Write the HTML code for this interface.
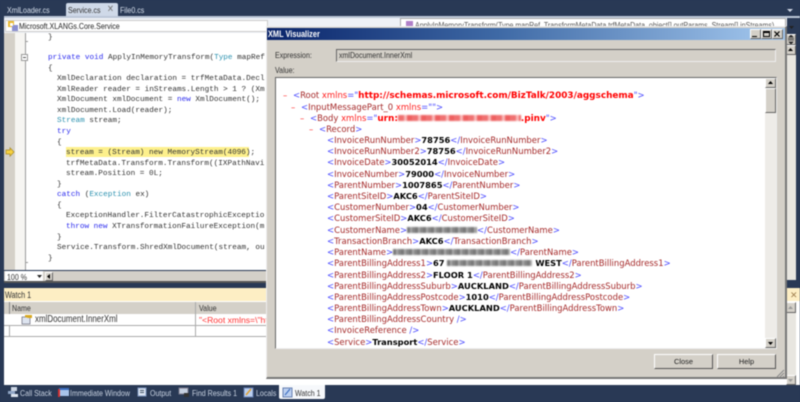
<!DOCTYPE html>
<html><head><meta charset="utf-8"><style>
html,body{margin:0;padding:0;width:800px;height:402px;overflow:hidden;background:#293955}
#r{position:relative;width:800px;height:402px;overflow:hidden;background:#293955;filter:blur(.45px);font-family:"Liberation Sans",sans-serif;font-size:8.6px;color:#222}
#r div{position:absolute;box-sizing:border-box}
.t{white-space:pre;line-height:12px;height:12px;transform:scaleX(.82);transform-origin:0 0}
.c{font-family:"Liberation Mono",monospace;font-size:7.7px;line-height:11px;height:11px;white-space:pre;color:#333;position:absolute;margin-top:1px}
.k{color:#2a2aee}.y{color:#2b91af}
.x{font-family:"DejaVu Sans",sans-serif;font-size:8.45px;line-height:12px;height:12px;white-space:pre;position:absolute;color:#a52a2a;margin-top:2px}
.x i{font-style:normal;color:#4a4aff}.x b{color:#000;font-weight:bold;font-size:8.3px}.x u{text-decoration:none;color:#ff2020}.x s{text-decoration:none;color:#f00;font-weight:bold;font-size:8.9px}
.d{color:#f33;display:inline-block;width:10px}
.bl{display:inline-block;height:6px;vertical-align:-0px;filter:blur(.8px);background:repeating-linear-gradient(90deg,#777 0 3px,#aaa 3px 5px,#888 5px 8px)}
.btn{background:#d4d0c8;border-top:1px solid #fff;border-left:1px solid #fff;border-right:1px solid #555;border-bottom:1px solid #555;text-align:center;line-height:13px;font-size:7.4px}
.sb{background:#d4d0c8;border-top:1px solid #fff;border-left:1px solid #fff;border-right:1px solid #666;border-bottom:1px solid #666}
.tb{color:#c9d3e2;top:387px;height:12px;line-height:12px;white-space:pre;font-size:8.6px;transform:scaleX(.82);transform-origin:0 0}
svg{position:absolute}
</style></head><body><div id="r">

<div class="t" style="left:7px;top:4px;color:#d6dfec">XmlLoader.cs</div>
<div style="left:66px;top:3px;width:52px;height:14px;background:#cfd9e8;border-radius:2px 2px 0 0"></div>
<div class="t" style="left:68px;top:4px;color:#333">Service.cs</div>
<div class="t" style="left:107px;top:4px;color:#777;font-size:10px">✕</div>
<div class="t" style="left:120px;top:4px;color:#d6dfec">File0.cs</div>
<svg style="left:786px;top:8px" width="8" height="5"><path d="M1 1h6L4 4z" fill="#d0d8e6"/></svg>

<div style="left:4px;top:16px;width:796px;height:2px;background:#bcc7d8"></div>
<div style="left:4px;top:18px;width:783px;height:252px;background:#fff"></div>
<div style="left:4px;top:18px;width:783px;height:15px;background:#eef1f6"></div>
<div style="left:5px;top:20px;width:263px;height:12px;background:#fff;border:1px solid #ccc"></div>
<svg style="left:8px;top:20px" width="11" height="12"><rect x="0" y="1" width="6" height="6" fill="#e8b830"/><rect x="4" y="5" width="6" height="6" fill="#8a8fd0"/><rect x="2" y="3" width="3" height="3" fill="#fff"/></svg>
<div class="t" style="left:19px;top:20px;color:#222">Microsoft.XLANGs.Core.Service</div>
<div style="left:400px;top:18px;width:386px;height:15px;background:#fff;border:1px solid #aaa"></div>
<div class="t" style="left:415px;top:19px;color:#555">ApplyInMemoryTransform(Type mapRef, TransformMetaData trfMetaData, object[] outParams, Stream[] inStreams)</div>
<svg style="left:405px;top:20px" width="9" height="9"><rect x="1" y="1" width="7" height="7" fill="#b080c8"/></svg>
<svg style="left:788px;top:26px" width="8" height="5"><path d="M1 0h5L3.500 3z" fill="#222"/></svg>

<div style="left:4px;top:33px;width:11px;height:237px;background:#d4d0c8"></div>
<div style="left:15px;top:33px;width:10px;height:237px;background:#f6f5f2"></div>
<div style="left:25px;top:33px;width:1px;height:237px;background:#9a9a9a"></div>
<div style="left:21px;top:54px;width:7px;height:7px;background:#fff;border:1px solid #999"></div>
<div style="left:23px;top:57px;width:3px;height:1px;background:#555"></div>
<div style="left:25px;top:41px;width:3px;height:1px;background:#999"></div>
<div style="left:25px;top:262px;width:3px;height:1px;background:#999"></div>
<svg style="left:5px;top:147px" width="10" height="10"><path d="M1 3h4V.800L9 5 5 9.200V7H1z" fill="#f6d040" stroke="#a88a20" stroke-width=".7"/></svg>
<div style="left:66px;top:147px;width:183px;height:10px;background:#fdf08c"></div>

<div class="c" style="left:48px;top:32px">}</div>
<div class="c" style="left:48px;top:52px"><span class="k">private void</span> ApplyInMemoryTransform(<span class="y">Type</span> mapRef</div>
<div class="c" style="left:48px;top:63px">{</div>
<div class="c" style="left:57px;top:73px">XmlDeclaration declaration = trfMetaData.Decl</div>
<div class="c" style="left:57px;top:84px">XmlReader reader = inStreams.Length &gt; 1 ? (Xm</div>
<div class="c" style="left:57px;top:94px">XmlDocument xmlDocument = <span class="k">new</span> XmlDocument();</div>
<div class="c" style="left:57px;top:105px">xmlDocument.Load(reader);</div>
<div class="c" style="left:57px;top:115px"><span class="y">Stream</span> stream;</div>
<div class="c" style="left:57px;top:126px"><span class="k">try</span></div>
<div class="c" style="left:57px;top:137px">{</div>
<div class="c" style="left:66px;top:147px">stream = (Stream) new MemoryStream(4096);</div>
<div class="c" style="left:66px;top:158px">trfMetaData.Transform.Transform((IXPathNavi</div>
<div class="c" style="left:66px;top:168px">stream.Position = 0L;</div>
<div class="c" style="left:57px;top:179px">}</div>
<div class="c" style="left:57px;top:189px"><span class="k">catch</span> (<span class="y">Exception</span> ex)</div>
<div class="c" style="left:57px;top:200px">{</div>
<div class="c" style="left:66px;top:210px">ExceptionHandler.FilterCatastrophicExceptio</div>
<div class="c" style="left:66px;top:221px"><span class="k">throw new</span> XTransformationFailureException(m</div>
<div class="c" style="left:57px;top:232px">}</div>
<div class="c" style="left:57px;top:242px">Service.Transform.ShredXmlDocument(stream, ou</div>
<div class="c" style="left:48px;top:253px">}</div>

<div style="left:4px;top:271px;width:783px;height:12px;background:#d4d0c8;border-bottom:2px solid #555"></div>
<div style="left:5px;top:271px;width:38px;height:10px;background:#fff"></div>
<div class="t" style="left:7px;top:271px;color:#333">100 %</div>
<svg style="left:37px;top:275px" width="6" height="4"><path d="M0 0h5L2.500 3z" fill="#222"/></svg>
<div class="sb" style="left:45px;top:272px;width:8px;height:9px"></div>
<svg style="left:47px;top:274px" width="4" height="6"><path d="M3 0v5L0 2.500z" fill="#000"/></svg>

<div class="sb" style="left:786px;top:34px;width:10px;height:11px"></div>
<svg style="left:787px;top:35px" width="8" height="9"><path d="M4 0l2 2H2zM1 3.500h6M1 5h6M4 9L2 7h4z" stroke="#222" stroke-width=".7" fill="#222"/></svg>
<div class="sb" style="left:786px;top:45px;width:10px;height:10px"></div>
<svg style="left:788px;top:48px" width="6" height="4"><path d="M0 3h5L2.500 0z" fill="#000"/></svg>
<div style="left:787px;top:55px;width:9px;height:225px;background:#e8e6e0"></div>

<div style="left:4px;top:288px;width:796px;height:97px;background:#fff"></div>
<div style="left:4px;top:288px;width:796px;height:13px;background:#fdeec4"></div>
<div class="t" style="left:5px;top:289px;color:#333;font-size:8.800px">Watch 1</div>
<div style="left:4px;top:302px;width:783px;height:12px;background:#d4d0c8"></div>
<div style="left:9px;top:302px;width:1px;height:12px;background:#888"></div>
<div class="t" style="left:12px;top:302px;color:#333">Name</div>
<div style="left:195px;top:302px;width:1px;height:35px;background:#aaa"></div>
<div class="t" style="left:199px;top:302px;color:#333">Value</div>
<div style="left:4px;top:325px;width:783px;height:1px;background:#aaa"></div>
<div style="left:4px;top:336px;width:783px;height:1px;background:#aaa"></div>
<div style="left:9px;top:326px;width:1px;height:11px;background:#aaa"></div>
<svg style="left:21px;top:314px" width="12" height="11"><rect x="1" y="3" width="8" height="7" fill="#dde4ef" stroke="#667" stroke-width=".7"/><path d="M4 3V1h7v3H7z" fill="#d8a820"/></svg>
<div class="t" style="left:35px;top:314px;color:#333;font-size:9.700px">xmlDocument.InnerXml</div>
<div class="t" style="left:199px;top:314px;color:#f33;font-size:8.600px;transform:none">"&lt;Root xmlns=\"ht</div>

<div style="left:790px;top:290px;width:7px;height:10px;color:#a08050;font-size:9px;line-height:10px">✕</div>
<div class="sb" style="left:786px;top:302px;width:10px;height:11px"></div>
<svg style="left:788px;top:306px" width="6" height="4"><path d="M0 3h5L2.500 0z" fill="#999"/></svg>
<div style="left:787px;top:313px;width:9px;height:62px;background:#e8e6e0"></div>
<div class="sb" style="left:786px;top:375px;width:10px;height:10px"></div>
<svg style="left:788px;top:379px" width="6" height="4"><path d="M0 0h5L2.500 3z" fill="#999"/></svg>

<svg style="left:7px;top:387px" width="12" height="11"><rect x="4" y="0" width="6" height="4" fill="#cdd6e4"/><rect x="1" y="4" width="7" height="3" fill="#8fa4c4"/><rect x="4" y="7" width="7" height="3" fill="#dfe6f0"/></svg>
<div class="tb" style="left:20px">Call Stack</div>
<svg style="left:57px;top:387px" width="12" height="11"><rect x="2" y="1" width="10" height="8" fill="#a9c4ea"/><rect x="2" y="1" width="10" height="2" fill="#3a6cc0"/><path d="M1 2h2v8H1z" fill="#d03030"/></svg>
<div class="tb" style="left:70px">Immediate Window</div>
<svg style="left:137px;top:387px" width="11" height="11"><rect x="1" y="1" width="8" height="8" fill="#dbe4f2" stroke="#8098c0"/><rect x="3" y="3" width="4" height="1" fill="#456"/><rect x="3" y="5" width="4" height="1" fill="#456"/></svg>
<div class="tb" style="left:150px">Output</div>
<svg style="left:178px;top:387px" width="13" height="11"><rect x="1" y="1" width="9" height="6" fill="#c6d0e0" stroke="#778"/><rect x="6" y="6" width="5" height="4" fill="#333"/></svg>
<div class="tb" style="left:192px">Find Results 1</div>
<svg style="left:243px;top:387px" width="12" height="11"><rect x="1" y="1" width="9" height="9" fill="#bcd0f0" stroke="#667fb0"/><path d="M3 8l5-6" stroke="#e0a030" stroke-width="1.500"/></svg>
<div class="tb" style="left:256px">Locals</div>
<div style="left:279px;top:385px;width:46px;height:14px;background:#f6f8fb;border-radius:0 0 2px 2px"></div>
<svg style="left:282px;top:387px" width="12" height="11"><rect x="1" y="1" width="9" height="9" fill="#bcd0f0" stroke="#667fb0"/><path d="M3 8l5-6" stroke="#4070c0" stroke-width="1.200"/></svg>
<div class="tb" style="left:295px;color:#333">Watch 1</div>

<!-- dialog -->
<div style="left:266px;top:26px;width:521px;height:353px;background:#d4d0c8;border-top:1px solid #eee;border-left:1px solid #eee;border-right:2px solid #777;border-bottom:2px solid #777"></div>
<div style="left:267px;top:28px;width:518px;height:12px;background:linear-gradient(90deg,#0a246a 0%,#3f6aa6 45%,#a6caf0 100%)"></div>
<div class="t" style="left:268px;top:28px;color:#fff;font-weight:bold;font-size:9px">XML Visualizer</div>
<div class="sb" style="left:750px;top:29px;width:11px;height:10px"></div>
<div style="left:752px;top:36px;width:5px;height:1px;background:#000"></div>
<div class="sb" style="left:761px;top:29px;width:11px;height:10px"></div>
<div style="left:763px;top:31px;width:7px;height:6px;border:1px solid #000;border-top-width:2px"></div>
<div class="sb" style="left:772px;top:29px;width:11px;height:10px"></div>
<svg style="left:774px;top:31px" width="7" height="7"><path d="M.5.500l5 5M5.500.500l-5 5" stroke="#000" stroke-width="1.200"/></svg>

<div class="t" style="left:275px;top:49px;color:#333">Expression:</div>
<div style="left:336px;top:49px;width:440px;height:13px;background:#d4d0c8;border-top:1px solid #666;border-left:1px solid #666;border-right:1px solid #eee;border-bottom:1px solid #eee"></div>
<div class="t" style="left:339px;top:49px;color:#333">xmlDocument.InnerXml</div>
<div class="t" style="left:275px;top:64px;color:#333">Value:</div>
<div style="left:275px;top:77px;width:502px;height:272px;background:#fff;border-top:1px solid #666;border-left:1px solid #666;border-right:1px solid #eee;border-bottom:1px solid #eee"></div>
<div class="sb" style="left:765px;top:78px;width:11px;height:10px"></div>
<svg style="left:768px;top:81px" width="6" height="4"><path d="M0 3h5L2.500 0z" fill="#000"/></svg>
<div class="sb" style="left:765px;top:88px;width:11px;height:25px"></div>
<div style="left:765px;top:113px;width:11px;height:225px;background:#eeece8"></div>
<div class="sb" style="left:765px;top:338px;width:11px;height:10px"></div>
<svg style="left:768px;top:342px" width="6" height="4"><path d="M0 0h5L2.500 3z" fill="#000"/></svg>

<div class="x" style="left:283px;top:87px"><span class="d">–</span><i>&lt;</i>Root <u>xmlns</u><i>="</i><s>http://schemas.microsoft.com/BizTalk/2003/aggschema</s><i>"&gt;</i></div>
<div class="x" style="left:291px;top:99px"><span class="d">–</span><i>&lt;</i>InputMessagePart_0 <u>xmlns</u><i>=""&gt;</i></div>
<div class="x" style="left:300px;top:110px"><span class="d">–</span><i>&lt;</i>Body <u>xmlns</u><i>="</i><s>urn:<span class="bl" style="width:123px;background:repeating-linear-gradient(90deg,#f07070 0 6px,#f9b8b8 6px 9px,#ee6060 9px 14px)"></span>.pinv</s><i>"&gt;</i></div>
<div class="x" style="left:309px;top:121px"><span class="d">–</span><i>&lt;</i>Record<i>&gt;</i></div>
<div class="x" style="left:327px;top:132px"><i>&lt;</i>InvoiceRunNumber<i>&gt;</i><b>78756</b><i>&lt;/</i>InvoiceRunNumber<i>&gt;</i></div>
<div class="x" style="left:327px;top:143px"><i>&lt;</i>InvoiceRunNumber2<i>&gt;</i><b>78756</b><i>&lt;/</i>InvoiceRunNumber2<i>&gt;</i></div>
<div class="x" style="left:327px;top:154px"><i>&lt;</i>InvoiceDate<i>&gt;</i><b>30052014</b><i>&lt;/</i>InvoiceDate<i>&gt;</i></div>
<div class="x" style="left:327px;top:166px"><i>&lt;</i>InvoiceNumber<i>&gt;</i><b>79000</b><i>&lt;/</i>InvoiceNumber<i>&gt;</i></div>
<div class="x" style="left:327px;top:177px"><i>&lt;</i>ParentNumber<i>&gt;</i><b>1007865</b><i>&lt;/</i>ParentNumber<i>&gt;</i></div>
<div class="x" style="left:327px;top:188px"><i>&lt;</i>ParentSiteID<i>&gt;</i><b>AKC6</b><i>&lt;/</i>ParentSiteID<i>&gt;</i></div>
<div class="x" style="left:327px;top:199px"><i>&lt;</i>CustomerNumber<i>&gt;</i><b>04</b><i>&lt;/</i>CustomerNumber<i>&gt;</i></div>
<div class="x" style="left:327px;top:210px"><i>&lt;</i>CustomerSiteID<i>&gt;</i><b>AKC6</b><i>&lt;/</i>CustomerSiteID<i>&gt;</i></div>
<div class="x" style="left:327px;top:222px"><i>&lt;</i>CustomerName<i>&gt;</i><span class="bl" style="width:70px"></span><i>&lt;/</i>CustomerName<i>&gt;</i></div>
<div class="x" style="left:327px;top:233px"><i>&lt;</i>TransactionBranch<i>&gt;</i><b>AKC6</b><i>&lt;/</i>TransactionBranch<i>&gt;</i></div>
<div class="x" style="left:327px;top:244px"><i>&lt;</i>ParentName<i>&gt;</i><span class="bl" style="width:117px"></span><i>&lt;/</i>ParentName<i>&gt;</i></div>
<div class="x" style="left:327px;top:255px"><i>&lt;</i>ParentBillingAddress1<i>&gt;</i><b>67 </b><span class="bl" style="width:85px"></span><b> WEST</b><i>&lt;/</i>ParentBillingAddress1<i>&gt;</i></div>
<div class="x" style="left:327px;top:267px"><i>&lt;</i>ParentBillingAddress2<i>&gt;</i><b>FLOOR 1</b><i>&lt;/</i>ParentBillingAddress2<i>&gt;</i></div>
<div class="x" style="left:327px;top:278px"><i>&lt;</i>ParentBillingAddressSuburb<i>&gt;</i><b>AUCKLAND</b><i>&lt;/</i>ParentBillingAddressSuburb<i>&gt;</i></div>
<div class="x" style="left:327px;top:289px"><i>&lt;</i>ParentBillingAddressPostcode<i>&gt;</i><b>1010</b><i>&lt;/</i>ParentBillingAddressPostcode<i>&gt;</i></div>
<div class="x" style="left:327px;top:300px"><i>&lt;</i>ParentBillingAddressTown<i>&gt;</i><b>AUCKLAND</b><i>&lt;/</i>ParentBillingAddressTown<i>&gt;</i></div>
<div class="x" style="left:327px;top:311px"><i>&lt;</i>ParentBillingAddressCountry <i>/&gt;</i></div>
<div class="x" style="left:327px;top:322px"><i>&lt;</i>InvoiceReference <i>/&gt;</i></div>
<div class="x" style="left:327px;top:334px"><i>&lt;</i>Service<i>&gt;</i><b>Transport</b><i>&lt;/</i>Service<i>&gt;</i></div>

<div class="btn" style="left:654px;top:354px;width:59px;height:15px">Close</div>
<div class="btn" style="left:717px;top:354px;width:59px;height:15px">Help</div>
<svg style="left:776px;top:369px" width="9" height="9"><path d="M8 1L1 8M8 4L4 8M8 7L7 8" stroke="#888" stroke-width="1"/></svg>
</div></body></html>
